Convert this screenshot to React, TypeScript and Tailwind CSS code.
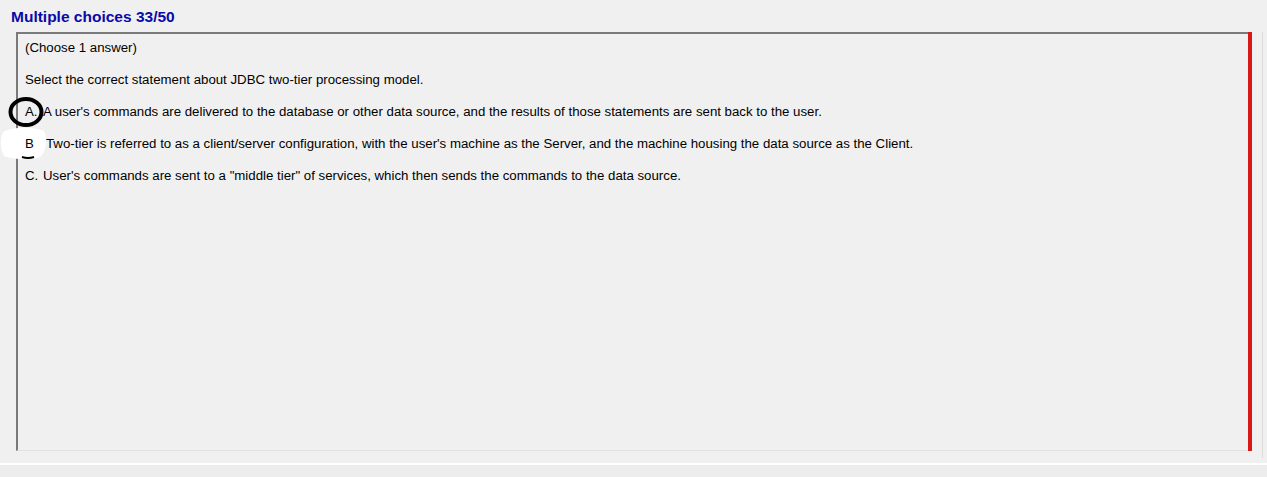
const options = [
  {
    key: "A.",
    text: "A user's commands are delivered to the database or other data source, and the results of those statements are sent back to the user.",
  },
  {
    key: "B",
    text: "Two-tier is referred to as a client/server configuration, with the user's machine as the Server, and the machine housing the data source as the Client.",
  },
  {
    key: "C.",
    text: "User's commands are sent to a \"middle tier\" of services, which then sends the commands to the data source.",
  },
];

const App = () => {
  return (
    <div
      className="relative w-[1267px] h-[477px] bg-[#f0f0f0] overflow-hidden text-black"
      style={{ fontFamily: '"Liberation Sans", Arial, sans-serif' }}
    >
      <div className="h-[32px] pl-[11px] pt-[8px]">
        <p className="text-[15.5px] leading-[18px] font-bold text-[#0a0aa8]">
          Multiple choices 33/50
        </p>
      </div>

      <div className="flex h-[426px]">
        <div className="ml-[16px] w-[1232px] h-[419px] border-l-2 border-t-2 border-l-[#7a7a7a] border-t-[#7a7a7a] border-b border-b-[#e2e2e2] bg-[#f0f0f0]">
          <div className="pl-[7px] pt-[6px] flex flex-col gap-[17px] text-[13.25px] leading-[15px] whitespace-pre">
            <p>(Choose 1 answer)</p>
            <p>Select the correct statement about JDBC two-tier processing model.</p>
            {options.map((o) => (
              <div key={o.key} className="flex">
                <span className={o.key === "B" ? "w-[21px]" : "w-[18px]"}>{o.key}</span>
                <span>{o.text}</span>
              </div>
            ))}
          </div>
        </div>
        <div className="w-[4px] h-[419px] bg-[#d81818]" />
        <div className="w-[11px] h-[426px] border-r border-r-[#dcdcdc]" />
      </div>

      <div className="h-[5px]" />
      <div className="h-[2px] bg-white" />
      <div className="h-[12px] bg-[#ededed]" />

      {/* hand-drawn marks over the options */}
      <svg className="absolute left-0 top-[90px]" width="60" height="80" viewBox="0 0 60 80">
        <path
          d="M3 42 C 12 37, 30 36, 44 41 C 48 50, 46 62, 40 67 C 32 70, 14 70, 4 66 C 0 58, 0 50, 3 42 Z"
          fill="#ffffff"
        />
        <ellipse cx="26" cy="22" rx="15.5" ry="13" fill="none" stroke="#000" strokeWidth="4" />
        <path d="M22 67 Q 28 69 34 67" stroke="#000" strokeWidth="2" fill="none" />
      </svg>
      <span className="absolute left-[25px] top-[136px] text-[13.25px] leading-[15px]">B</span>
    </div>
  );
};

export default App;
